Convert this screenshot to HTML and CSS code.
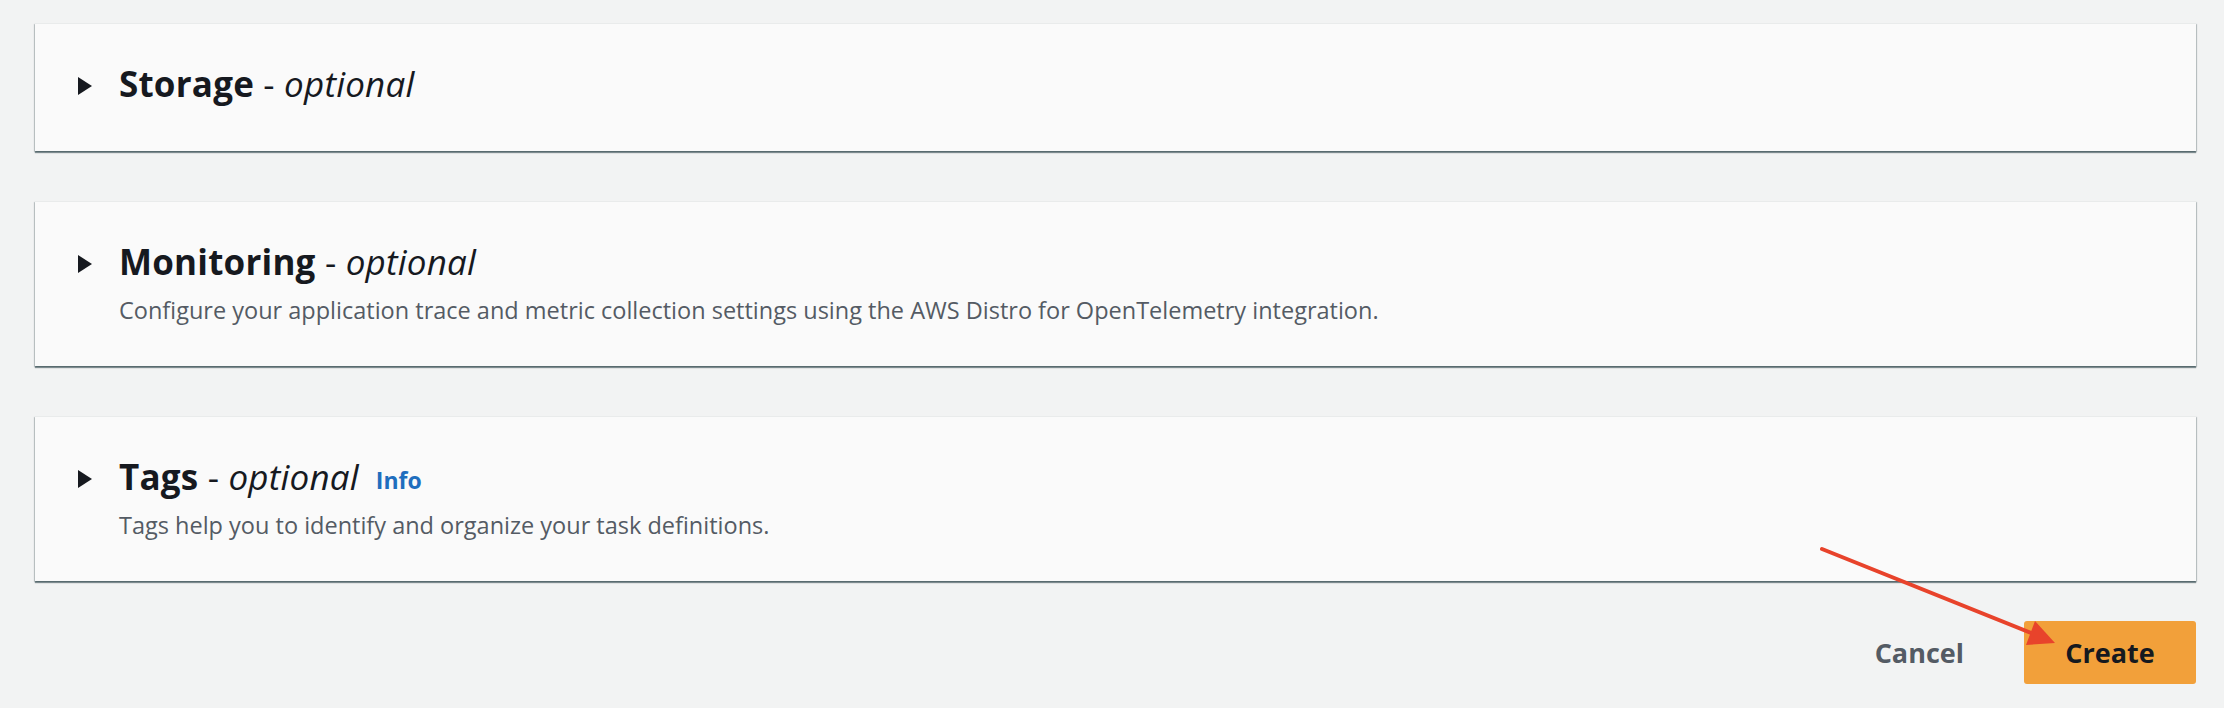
FILE: index.html
```html
<!DOCTYPE html>
<html lang="en">
<head>
<meta charset="utf-8">
<title>Create task definition</title>
<link rel="stylesheet" href="styles.css">
</head>
<body>
<main class="page">
  <section class="card card-single">
    <div class="card-header">
      <span class="caret"></span>
      <h2 class="title">Storage <span class="dash">-</span> <em class="optional">optional</em></h2>
    </div>
  </section>

  <section class="card">
    <div class="card-header">
      <span class="caret"></span>
      <h2 class="title">Monitoring <span class="dash">-</span> <em class="optional">optional</em></h2>
    </div>
    <p class="description">Configure your application trace and metric collection settings using the AWS Distro for OpenTelemetry integration.</p>
  </section>

  <section class="card">
    <div class="card-header">
      <span class="caret"></span>
      <h2 class="title">Tags <span class="dash">-</span> <em class="optional">optional</em></h2>
      <a class="info" href="#">Info</a>
    </div>
    <p class="description">Tags help you to identify and organize your task definitions.</p>
  </section>

  <div class="actions">
    <button class="btn-link" type="button">Cancel</button>
    <button class="btn-primary" type="button">Create</button>
  </div>
</main>

<svg class="annotation" width="2224" height="708" viewBox="0 0 2224 708" aria-hidden="true">
  <line x1="1822" y1="549" x2="2036" y2="635" stroke="#e8432b" stroke-width="4" stroke-linecap="round"/>
  <polygon points="2055,643 2035,621 2026,645" fill="#e8432b"/>
</svg>
</body>
</html>
```

FILE: styles.css
```css
* {
  box-sizing: border-box;
}

html, body {
  margin: 0;
  padding: 0;
}

body {
  background: #f2f3f3;
  font-family: "Open Sans", "Liberation Sans", sans-serif;
  color: #16191f;
  width: 2224px;
  height: 708px;
  overflow: hidden;
}

.page {
  display: flex;
  flex-direction: column;
  gap: 50px;
  padding: 23px 28px 0 35px;
}

.card {
  background: #fafafa;
  border-top: 1px solid #e9ebeb;
  box-shadow: 0 2px 1px 0 rgba(0, 28, 36, 0.45), 1px 1px 1px 0 rgba(0, 28, 36, 0.18), -1px 1px 1px 0 rgba(0, 28, 36, 0.18);
  padding: 38px 40px 40px 43px;
}

.card-single {
  padding-bottom: 45px;
}

.card-header {
  display: flex;
  align-items: center;
  height: 44px;
}

.caret {
  width: 0;
  height: 0;
  border-top: 9px solid transparent;
  border-bottom: 9px solid transparent;
  border-left: 14px solid #16191f;
  margin-right: 27px;
  margin-top: 4px;
}

.title {
  margin: 0;
  font-size: 35px;
  line-height: 44px;
  font-weight: 700;
  color: #16191f;
  letter-spacing: 0.2px;
}

.dash {
  font-weight: 400;
}

.optional {
  font-weight: 400;
  font-style: italic;
}

.info {
  margin-left: 17px;
  margin-top: 5px;
  font-size: 23px;
  font-weight: 700;
  color: #1f6ebe;
  text-decoration: none;
}

.description {
  margin: 10px 0 0 41px;
  font-size: 23.5px;
  line-height: 32px;
  color: #545b64;
}

.actions {
  display: flex;
  justify-content: flex-end;
  align-items: center;
  gap: 60px;
  margin-top: -10px;
}

.btn-link {
  background: none;
  border: none;
  padding: 0;
  font-family: inherit;
  font-size: 27px;
  font-weight: 700;
  color: #545b64;
}

.btn-primary {
  width: 172px;
  height: 63px;
  background: #f2a03a;
  border: none;
  border-radius: 3px;
  font-family: inherit;
  font-size: 27px;
  font-weight: 700;
  color: #16191f;
}

.annotation {
  position: absolute;
  left: 0;
  top: 0;
  pointer-events: none;
}
```
